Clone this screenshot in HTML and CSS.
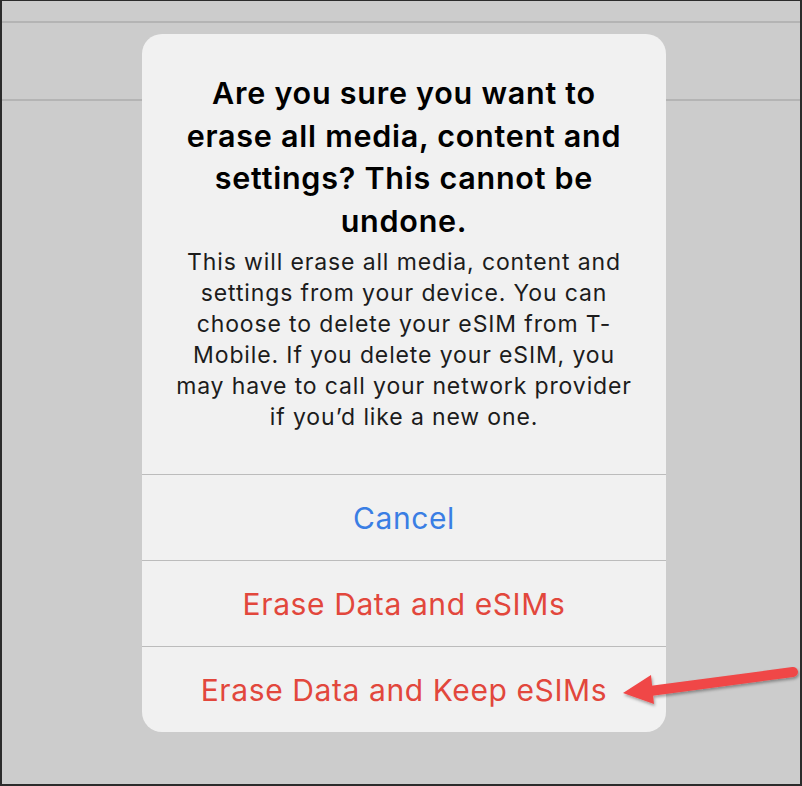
FILE: index.html
```html
<!DOCTYPE html>
<html lang="en">
<head>
    <meta charset="UTF-8">
    <meta name="viewport" content="width=device-width, initial-scale=1.0">
    <title>Erase iPhone</title>
    <link rel="stylesheet" href="styles.css">
</head>
<body>
    <div class="screen">
        <div class="bg-row bg-row-top"></div>
        <div class="bg-row bg-row-mid"></div>

        <div class="alert">
            <div class="alert-body">
                <h1>Are you sure you want to erase all media, content and settings? This cannot be undone.</h1>
                <p>This will erase all media, content and settings from your device. You can choose to delete your eSIM from T-Mobile. If you delete your eSIM, you may have to call your network provider if you&rsquo;d like a new one.</p>
            </div>
            <button class="alert-btn cancel">Cancel</button>
            <button class="alert-btn danger">Erase Data and eSIMs</button>
            <button class="alert-btn danger">Erase Data and Keep eSIMs</button>
        </div>

        <!-- annotation arrow -->
        <svg class="arrow" width="190" height="50" viewBox="0 0 190 50">
            <defs>
                <filter id="shadow" x="-20%" y="-50%" width="140%" height="200%">
                    <feDropShadow dx="1" dy="2" stdDeviation="1.5" flood-color="#000" flood-opacity="0.35"/>
                </filter>
            </defs>
            <g filter="url(#shadow)">
                <line x1="183" y1="12" x2="40" y2="31" stroke="#f04747" stroke-width="10" stroke-linecap="round"/>
                <polygon points="13,33 41,15 44,44" fill="#f04747"/>
            </g>
        </svg>
    </div>
</body>
</html>
```

FILE: styles.css
```css
/* General Styles */
body {
    margin: 0;
    padding: 0;
    font-family: Inter, "Noto Sans", sans-serif;
}
.screen {
    position: relative;
    width: 802px;
    height: 786px;
    box-sizing: border-box;
    border: 2px solid #2b2b2b;
    border-top-width: 1px;
    background-color: #cccccc;
    overflow: hidden;
}
.bg-row {
    border-bottom: 2px solid #b4b4b4;
}
.bg-row-top {
    height: 20px;
}
.bg-row-mid {
    height: 76px;
}

/* Alert */
.alert {
    position: absolute;
    left: 140px;
    top: 33px;
    width: 524px;
    height: 698px;
    background-color: #f1f1f1;
    border-radius: 20px;
    display: flex;
    flex-direction: column;
    overflow: hidden;
}
.alert-body {
    flex: 1;
    padding: 38px 33px 0;
    text-align: center;
}
.alert h1 {
    margin: 0 8px 5px;
    font-size: 30.5px;
    line-height: 42.5px;
    font-weight: 600;
    letter-spacing: 0.75px;
    color: #000;
}
.alert p {
    margin: 0;
    font-size: 23px;
    line-height: 31px;
    letter-spacing: 0.87px;
    color: #1c1c1c;
}
.alert-btn {
    height: 86px;
    border: none;
    border-top: 1.5px solid #bcbcbc;
    background: none;
    font-family: inherit;
    font-size: 30px;
    letter-spacing: 0.6px;
    padding: 0;
}
.cancel {
    color: #3a7ee4;
}
.danger {
    color: #e2473c;
}

.arrow {
    position: absolute;
    left: 608px;
    top: 659px;
}
```
